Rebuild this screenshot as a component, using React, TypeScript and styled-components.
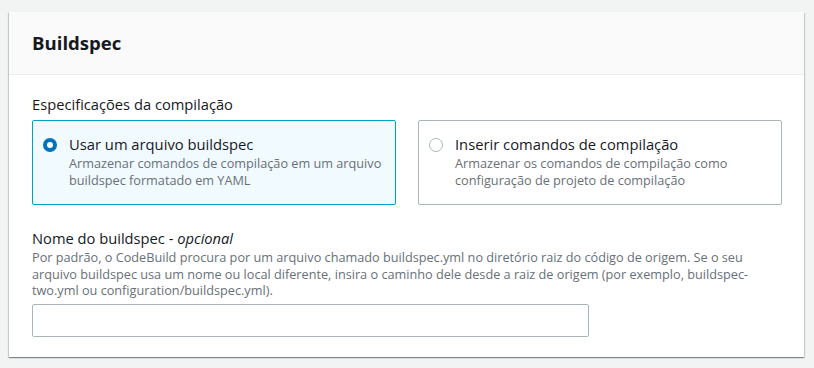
import styled, { createGlobalStyle } from "styled-components";

const GlobalStyle = createGlobalStyle`
  html, body {
    margin: 0;
    padding: 0;
    background: #f2f3f3;
  }
  body {
    font-family: "Open Sans", "Noto Sans", Arial, sans-serif;
    color: #16191f;
  }
`;

const Page = styled.div`
  padding: 12px 10px 10px 9px;
  width: 814px;
  box-sizing: border-box;
`;

const Card = styled.section`
  background: #ffffff;
  box-shadow: 0 1px 1px 0 rgba(0, 28, 36, 0.3), 1px 1px 1px 0 rgba(0, 28, 36, 0.15),
    -1px 1px 1px 0 rgba(0, 28, 36, 0.15);
`;

const CardHeader = styled.header`
  background: #fafafa;
  border-bottom: 1px solid #eaeded;
  height: 63px;
  box-sizing: border-box;
  padding: 0 22px 0 23px;
  display: flex;
  align-items: center;
`;

const Title = styled.h2`
  margin: 0;
  font-size: 18.6px;
  font-weight: 700;
  line-height: 22px;
  color: #16191f;
`;

const CardBody = styled.div`
  padding: 18px 22px 20px 23px;
  display: flex;
  flex-direction: column;
`;

const FieldLabel = styled.div`
  font-size: 14.7px;
  line-height: 22px;
  color: #16191f;
`;

const TileGrid = styled.div`
  display: grid;
  grid-template-columns: 1fr 1fr;
  gap: 22px;
  margin-top: 5px;
`;

const Tile = styled.label<{ $selected?: boolean }>`
  display: flex;
  gap: 12px;
  height: 85px;
  box-sizing: border-box;
  padding: 13px 6px 0 10px;
  border: 1px solid ${(p) => (p.$selected ? "#00a1c9" : "#aab7b8")};
  background: ${(p) => (p.$selected ? "#f1faff" : "#ffffff")};
  border-radius: 2px;
`;

const Radio = styled.span<{ $checked?: boolean }>`
  flex: none;
  width: 14px;
  height: 14px;
  margin-top: 4px;
  box-sizing: border-box;
  border-radius: 50%;
  border: ${(p) => (p.$checked ? "4px solid #0073bb" : "1px solid #aab7b8")};
  background: #ffffff;
`;

const TileText = styled.div`
  display: flex;
  flex-direction: column;
`;

const TileTitle = styled.div`
  font-size: 14.75px;
  line-height: 21px;
  color: #16191f;
`;

const Description = styled.div`
  font-size: 12.7px;
  line-height: 16.5px;
  color: #687078;
`;

const NameLabel = styled(FieldLabel)`
  margin-top: 22px;

  em {
    font-style: italic;
  }
`;

const TextInput = styled.input`
  margin-top: 5px;
  width: 557px;
  height: 33px;
  box-sizing: border-box;
  border: 1px solid #aab7b8;
  border-radius: 2px;
  background: #ffffff;
  font: inherit;
  font-size: 14px;
  padding: 4px 10px;
  outline: none;
`;

export default function App() {
  return (
    <>
      <GlobalStyle />
      <Page>
        <Card>
          <CardHeader>
            <Title>Buildspec</Title>
          </CardHeader>
          <CardBody>
            <FieldLabel>Especificações da compilação</FieldLabel>
            <TileGrid>
              <Tile $selected>
                <Radio $checked />
                <TileText>
                  <TileTitle>Usar um arquivo buildspec</TileTitle>
                  <Description>
                    Armazenar comandos de compilação em um arquivo buildspec formatado em YAML
                  </Description>
                </TileText>
              </Tile>
              <Tile>
                <Radio />
                <TileText>
                  <TileTitle>Inserir comandos de compilação</TileTitle>
                  <Description>
                    Armazenar os comandos de compilação como configuração de projeto de compilação
                  </Description>
                </TileText>
              </Tile>
            </TileGrid>
            <NameLabel>
              Nome do buildspec - <em>opcional</em>
            </NameLabel>
            <Description>
              Por padrão, o CodeBuild procura por um arquivo chamado buildspec.yml no diretório raiz
              do código de origem. Se o seu arquivo buildspec usa um nome ou local diferente, insira
              o caminho dele desde a raiz de origem (por exemplo, buildspec-two.yml ou
              configuration/buildspec.yml).
            </Description>
            <TextInput type="text" />
          </CardBody>
        </Card>
      </Page>
    </>
  );
}
